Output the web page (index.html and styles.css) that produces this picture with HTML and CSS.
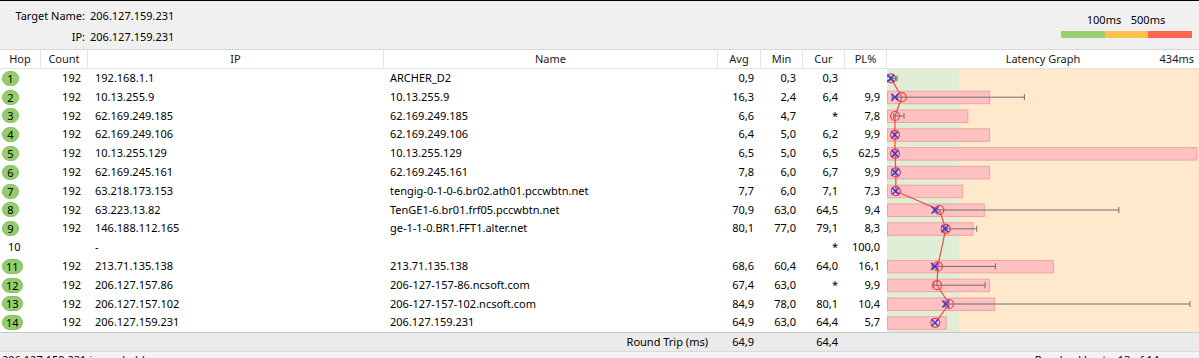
FILE: index.html
```html
<!DOCTYPE html>
<html lang="en">
<head>
    <meta charset="UTF-8">
    <title>Trace Route</title>
    <link rel="stylesheet" href="styles.css">
</head>
<body>

    <div class="top">
        <div class="target">
            <span class="lbl">Target Name:</span><span>206.127.159.231</span>
            <span class="lbl">IP:</span><span>206.127.159.231</span>
        </div>
        <div class="legend">
            <div class="legend-labels"><span>100ms</span><span>500ms</span></div>
            <div class="legend-bar"><i class="g"></i><i class="o"></i><i class="r"></i></div>
        </div>
    </div>

    <div class="grid head">
        <div>Hop</div>
        <div>Count</div>
        <div>IP</div>
        <div>Name</div>
        <div>Avg</div>
        <div>Min</div>
        <div>Cur</div>
        <div>PL%</div>
        <div class="head-graph"><span>Latency Graph</span><span class="max">434ms</span></div>
    </div>

    <div class="grid rows" id="rows">
        <div class="graph" id="graph"></div>
    </div>

    <div class="grid total">
        <div></div><div></div><div></div>
        <div class="num label">Round Trip (ms)</div>
        <div class="num">64,9</div>
        <div></div>
        <div class="num">64,4</div>
        <div></div><div></div>
    </div>

    <div class="status">
        <span>206.127.159.231 is reachable</span>
        <span class="status-right">Resolved hosts: 13 of 14</span>
    </div>

    <script>
        // hop, count, ip, name, avg, min, cur, pl, max
        const hops = [
            [1, 192, '192.168.1.1', 'ARCHER_D2', 0.9, 0.3, 0.3, null, 9.4],
            [2, 192, '10.13.255.9', '10.13.255.9', 16.3, 2.4, 6.4, 9.9, 194],
            [3, 192, '62.169.249.185', '62.169.249.185', 6.6, 4.7, null, 7.8, 19.6],
            [4, 192, '62.169.249.106', '62.169.249.106', 6.4, 5.0, 6.2, 9.9, null],
            [5, 192, '10.13.255.129', '10.13.255.129', 6.5, 5.0, 6.5, 62.5, null],
            [6, 192, '62.169.245.161', '62.169.245.161', 7.8, 6.0, 6.7, 9.9, null],
            [7, 192, '63.218.173.153', 'tengig-0-1-0-6.br02.ath01.pccwbtn.net', 7.7, 6.0, 7.1, 7.3, null],
            [8, 192, '63.223.13.82', 'TenGE1-6.br01.frf05.pccwbtn.net', 70.9, 63.0, 64.5, 9.4, 331],
            [9, 192, '146.188.112.165', 'ge-1-1-0.BR1.FFT1.alter.net', 80.1, 77.0, 79.1, 8.3, 125],
            [10, null, '-', '', null, null, null, 100.0, null],
            [11, 192, '213.71.135.138', '213.71.135.138', 68.6, 60.4, 64.0, 16.1, 152],
            [12, 192, '206.127.157.86', '206-127-157-86.ncsoft.com', 67.4, 63.0, null, 9.9, 137],
            [13, 192, '206.127.157.102', '206-127-157-102.ncsoft.com', 84.9, 78.0, 80.1, 10.4, 434],
            [14, 192, '206.127.159.231', '206.127.159.231', 64.9, 63.0, 64.4, 5.7, null]
        ];

        const ROW = 18.8;
        const fmt = v => v === null ? '' : v.toFixed(1).replace('.', ',');
        const px = ms => 3.5 + ms * 0.69;

        function buildRows() {
            const rows = document.getElementById('rows');
            hops.forEach(h => {
                const [hop, count, ip, name, avg, min, cur, pl] = h;
                const row = document.createElement('div');
                row.className = 'row';
                const badge = count ? `<span class="badge">${hop}</span>` : `<span class="plain">${hop}</span>`;
                row.innerHTML = `
                    <div class="hop">${badge}</div>
                    <div class="num">${count || ''}</div>
                    <div class="txt">${ip}</div>
                    <div class="txt">${name}</div>
                    <div class="num">${fmt(avg)}</div>
                    <div class="num">${fmt(min)}</div>
                    <div class="num">${cur === null ? '*' : fmt(cur)}</div>
                    <div class="num">${fmt(pl)}</div>
                `;
                rows.appendChild(row);
            });
        }

        function buildGraph() {
            let bars = '', whiskers = '', marks = '', points = [];
            hops.forEach((h, i) => {
                const [hop, count, ip, name, avg, min, cur, pl, max] = h;
                const y = ROW * i + ROW / 2;
                if (pl !== null && count) {
                    const w = Math.min(pl * 10.3, 309.5);
                    bars += `<rect x="0.5" y="${y - 6}" width="${w}" height="12.5" class="bar"/>`;
                }
                if (avg === null) return;
                if (max !== null) {
                    const a = px(min), b = px(max);
                    whiskers += `<path d="M${a} ${y}H${b}M${a} ${y - 3}v6M${b} ${y - 3}v6" class="whisker"/>`;
                }
                const x = px(avg);
                points.push(`${x},${y}`);
                marks += `<circle cx="${x}" cy="${y}" r="4.5" class="avg"/>`;
                if (cur !== null) {
                    const c = px(cur);
                    marks += `<path d="M${c - 3.5} ${y - 3.5}l7 7M${c - 3.5} ${y + 3.5}l7 -7" class="cur"/>`;
                }
            });
            const line = `<polyline points="${points.join(' ')}" class="trend"/>`;
            document.getElementById('graph').innerHTML =
                `<svg width="312" height="${ROW * 14}">${bars}${whiskers}${line}${marks}</svg>`;
        }

        buildRows();
        buildGraph();
    </script>

</body>
</html>
```

FILE: styles.css
```css
body {
    margin: 0;
    width: 1199px;
    height: 358px;
    overflow: hidden;
    font-family: 'Noto Sans', 'Open Sans', sans-serif;
    font-size: 11px;
    color: #000;
    background-color: #fff;
}
.top {
    height: 48px;
    border-top: 1px solid #000;
    background-color: #f0f0f0;
    display: flex;
    justify-content: space-between;
}
.target {
    display: grid;
    grid-template-columns: 85px auto;
    column-gap: 5px;
    row-gap: 5px;
    padding-top: 7px;
    line-height: 16px;
    align-content: start;
}
.target .lbl {
    text-align: right;
}
.legend {
    margin-right: 7px;
    padding-top: 12px;
    width: 131px;
}
.legend-labels {
    display: flex;
    padding-left: 21px;
    line-height: 14px;
}
.legend-labels span {
    width: 44px;
    text-align: center;
}
.legend-bar {
    display: flex;
    height: 7px;
    margin-top: 4px;
}
.legend-bar i {
    flex: 1;
}
.legend-bar .g {
    background-color: #9ccf70;
}
.legend-bar .o {
    background-color: #ffc04c;
}
.legend-bar .r {
    background-color: #ff6652;
}
.grid {
    display: grid;
    grid-template-columns: 41px 47px 296px 334px 43px 42px 42px 42px 312px;
}
.head {
    height: 20px;
    box-sizing: border-box;
    border-top: 1px solid #d6d6d6;
    border-bottom: 1px solid #e3e3e3;
    background-color: #fff;
    line-height: 18px;
    color: #1a1a1a;
}
.head > div {
    text-align: center;
    border-right: 1px solid #e5e5e5;
}
.head > div:last-child {
    border-right: none;
}
.head-graph {
    position: relative;
}
.head-graph .max {
    position: absolute;
    right: 5px;
    top: 0;
}
.rows {
    grid-auto-rows: 18.8px;
    line-height: 18.8px;
}
.row {
    display: contents;
}
.num {
    text-align: right;
    padding-right: 7px;
    white-space: nowrap;
}
.txt {
    padding-left: 7px;
    white-space: nowrap;
    overflow: hidden;
}
.row .txt + .txt {
    padding-left: 6px;
}
.hop {
    display: flex;
    align-items: center;
    padding-left: 2px;
}
.badge {
    display: inline-flex;
    justify-content: center;
    align-items: center;
    min-width: 9px;
    height: 13px;
    padding: 0 3px;
    border: 1px solid #84be5c;
    border-radius: 8px;
    background-color: #95cc6c;
    line-height: 13px;
}
.plain {
    padding-left: 6px;
}
.graph {
    grid-column: 9;
    grid-row: 1 / 15;
    background: linear-gradient(to right, #dfeed5 0, #dfeed5 72px, #ffe9cc 72px);
}
.graph svg {
    display: block;
}
.bar {
    fill: #ffc1c1;
    stroke: #eea4a4;
    stroke-width: 1;
}
.whisker {
    fill: none;
    stroke: #6e6e6e;
    stroke-width: 1;
}
.trend {
    fill: none;
    stroke: #f24848;
    stroke-width: 1.2;
}
.avg {
    fill: none;
    stroke: #f03c3c;
    stroke-width: 1.2;
}
.cur {
    fill: none;
    stroke: #3a3ae0;
    stroke-width: 1.6;
}
.total {
    height: 18px;
    border-top: 1px solid #c8c8c8;
    background-color: #ebebeb;
    line-height: 18px;
}
.total .label {
    padding-right: 10px;
}
.status {
    border-top: 1px solid #dadada;
    background-color: #f3f3f3;
    display: flex;
    justify-content: space-between;
    padding: 1px 40px 0 2px;
    line-height: 14px;
}
```
